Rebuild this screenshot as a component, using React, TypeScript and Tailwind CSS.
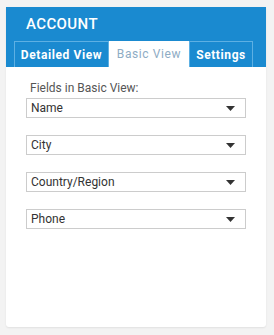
import React from 'react';

const fields = ['Name', 'City', 'Country/Region', 'Phone'];

const Caret = () => (
  <svg width="9" height="5" viewBox="0 0 9 5" className="shrink-0">
    <path d="M0 0 L9 0 L4.5 5 Z" fill="#333" />
  </svg>
);

const App = () => {
  return (
    <div className="min-h-[335px] w-[274px] bg-[#f3f3f3] pt-[7px] pl-[6px] font-['Roboto',sans-serif]">
      <div className="flex h-[320px] w-[260px] flex-col rounded-b-[3px] bg-white shadow-[0_1px_2px_rgba(0,0,0,0.08)]">
        <div className="flex h-[60px] flex-col bg-[#1a8ad0]">
          <h2 className="pt-[8px] pl-[20px] text-[15px] leading-[19px] font-medium tracking-[0.4px] text-white">ACCOUNT</h2>
          <div className="mt-auto flex pl-[8px]">
            <button className="h-[26px] w-[95px] border border-b-0 border-[#5db0e3] text-[12px] font-bold tracking-[0.6px] text-white">
              Detailed View
            </button>
            <button className="h-[26px] w-[80px] bg-white text-[12px] tracking-[0.6px] text-[#8eacc4]">
              Basic View
            </button>
            <button className="h-[26px] w-[64px] border border-b-0 border-[#5db0e3] text-[12px] font-bold tracking-[0.6px] text-white">
              Settings
            </button>
          </div>
        </div>
        <div className="flex flex-col pt-[13px] pl-[20px]">
          <p className="pl-[4px] text-[12px] leading-[16px] text-[#555]">Fields in Basic View:</p>
          <div className="mt-[2px] flex flex-col gap-[17px]">
            {fields.map((f) => (
              <div
                key={f}
                className="flex h-[20px] w-[220px] items-center justify-between border border-[#cccccc] pr-[10px] pl-[4px] text-[12px] text-[#333]"
              >
                <span>{f}</span>
                <Caret />
              </div>
            ))}
          </div>
        </div>
      </div>
    </div>
  );
};

export default App;
